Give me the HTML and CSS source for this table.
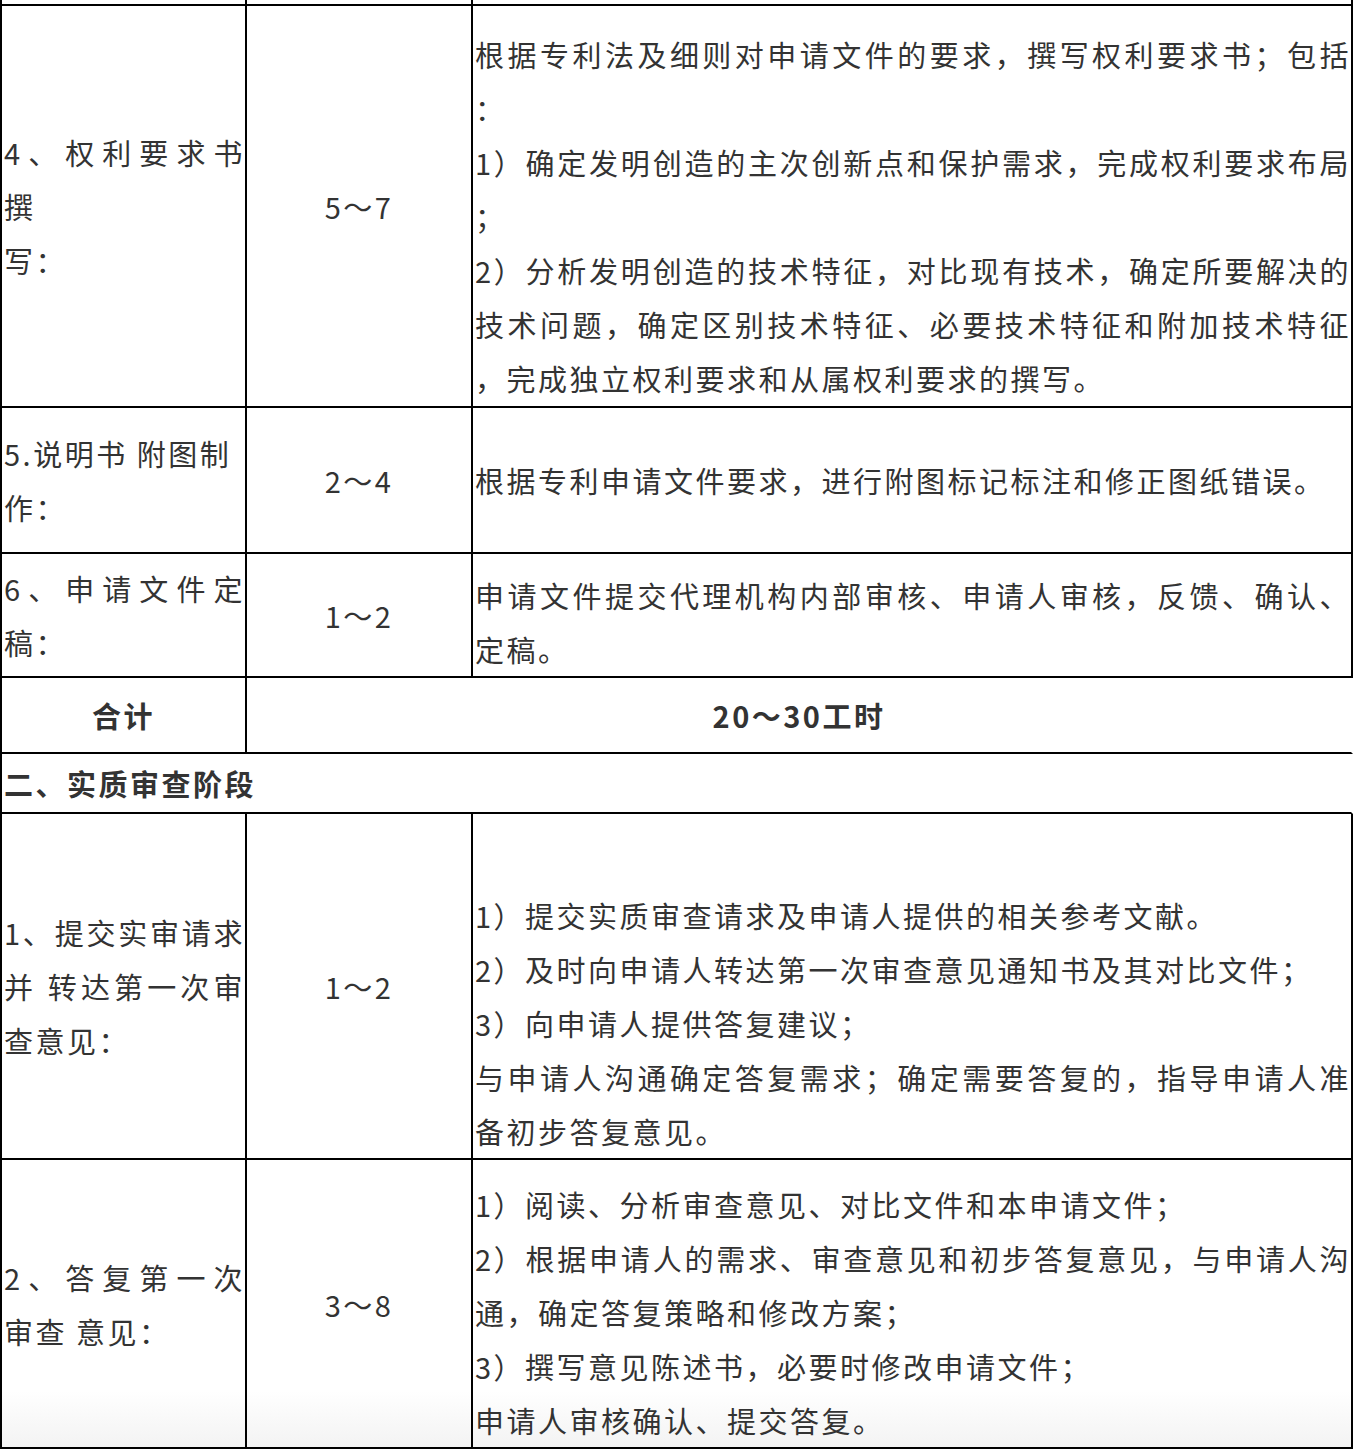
FILE: index.html
```html
<!DOCTYPE html>
<html lang="zh-CN">
<head>
<meta charset="utf-8">
<title>专利申请工时表</title>
<link rel="stylesheet" href="styles.css">
</head>
<body>
<table class="sheet">
  <colgroup>
    <col class="c1">
    <col class="c2">
    <col class="c3">
  </colgroup>
  <tbody>
    <tr class="r-stub"><td></td><td></td><td></td></tr>
    <tr class="r4">
      <td class="name"><span class="ln j">4、权利要求书</span><span class="ln">撰</span><span class="ln">写：</span></td>
      <td class="hrs">5～7</td>
      <td class="desc pt20">
        <span class="ln j">根据专利法及细则对申请文件的要求，撰写权利要求书；包括</span>
        <span class="ln">：</span>
        <span class="ln j">1）确定发明创造的主次创新点和保护需求，完成权利要求布局</span>
        <span class="ln">；</span>
        <span class="ln j">2）分析发明创造的技术特征，对比现有技术，确定所要解决的</span>
        <span class="ln j">技术问题，确定区别技术特征、必要技术特征和附加技术特征</span>
        <span class="ln">，完成独立权利要求和从属权利要求的撰写。</span>
      </td>
    </tr>
    <tr class="r5">
      <td class="name"><span class="ln">5.说明书 附图制</span><span class="ln">作：</span></td>
      <td class="hrs">2～4</td>
      <td class="desc"><span class="ln">根据专利申请文件要求，进行附图标记标注和修正图纸错误。</span></td>
    </tr>
    <tr class="r6">
      <td class="name"><span class="ln j">6、申请文件定</span><span class="ln">稿：</span></td>
      <td class="hrs">1～2</td>
      <td class="desc pt14">
        <span class="ln j">申请文件提交代理机构内部审核、申请人审核，反馈、确认、</span>
        <span class="ln">定稿。</span>
      </td>
    </tr>
    <tr class="r-total">
      <td class="total">合计</td>
      <td class="total span" colspan="2">20～30工时</td>
    </tr>
    <tr class="r-stage">
      <td class="stage span" colspan="3">二、实质审查阶段</td>
    </tr>
    <tr class="s1">
      <td class="name"><span class="ln j">1、提交实审请求</span><span class="ln j">并 转达第一次审</span><span class="ln">查意见：</span></td>
      <td class="hrs">1～2</td>
      <td class="desc pt74">
        <span class="ln">1）提交实质审查请求及申请人提供的相关参考文献。</span>
        <span class="ln">2）及时向申请人转达第一次审查意见通知书及其对比文件；</span>
        <span class="ln">3）向申请人提供答复建议；</span>
        <span class="ln j">与申请人沟通确定答复需求；确定需要答复的，指导申请人准</span>
        <span class="ln">备初步答复意见。</span>
      </td>
    </tr>
    <tr class="s2">
      <td class="name"><span class="ln j">2、答复第一次</span><span class="ln">审查 意见：</span></td>
      <td class="hrs">3～8</td>
      <td class="desc pt17">
        <span class="ln">1）阅读、分析审查意见、对比文件和本申请文件；</span>
        <span class="ln j">2）根据申请人的需求、审查意见和初步答复意见，与申请人沟</span>
        <span class="ln">通，确定答复策略和修改方案；</span>
        <span class="ln">3）撰写意见陈述书，必要时修改申请文件；</span>
        <span class="ln">申请人审核确认、提交答复。</span>
      </td>
    </tr>
  </tbody>
</table>
</body>
</html>
```
FILE: styles.css
```css
html, body {
  margin: 0;
  padding: 0;
  background: #fff;
}

body {
  font-family: "Noto Sans CJK SC", "Noto Sans", sans-serif;
  font-size: 29px;
  line-height: 54px;
  color: #333;
  letter-spacing: 2.5px;
}

.sheet {
  border-collapse: separate;
  border-spacing: 0;
  table-layout: fixed;
  width: 1353px;
  border-left: 2px solid #000;
}

.c1 { width: 245px; }
.c2 { width: 226px; }
.c3 { width: 880px; }

.sheet td {
  border-right: 2px solid #000;
  border-bottom: 2px solid #000;
  padding: 0 0 0 2px;
  vertical-align: middle;
  text-align: left;
}

.r-stub { height: 6px; }
.r-stub td { padding: 0; }
.r4 { height: 402px; }
.r5 { height: 146px; }
.r6 { height: 124px; }
.r-total { height: 76px; }
.r-stage { height: 60px; }
.s1 { height: 346px; }
.s2 { height: 289px; }

.ln { display: block; }
.j { text-align: justify; text-align-last: justify; }

.sheet td.hrs { text-align: center; padding: 0; }

.pt14 { padding-top: 14px !important; }
.pt17 { padding-top: 17px !important; }
.pt20 { padding-top: 20px !important; }
.pt74 { padding-top: 74px !important; }

.sheet td.total {
  font-weight: 700;
  text-align: center;
  padding: 0;
}

.sheet td.stage {
  font-weight: 700;
  text-align: left;
}

.sheet td.span { border-right-color: transparent; }

.s2 td {
  background: linear-gradient(to bottom, #fff 0, #fff calc(100% - 56px), #f3f3f3 100%);
}
```
